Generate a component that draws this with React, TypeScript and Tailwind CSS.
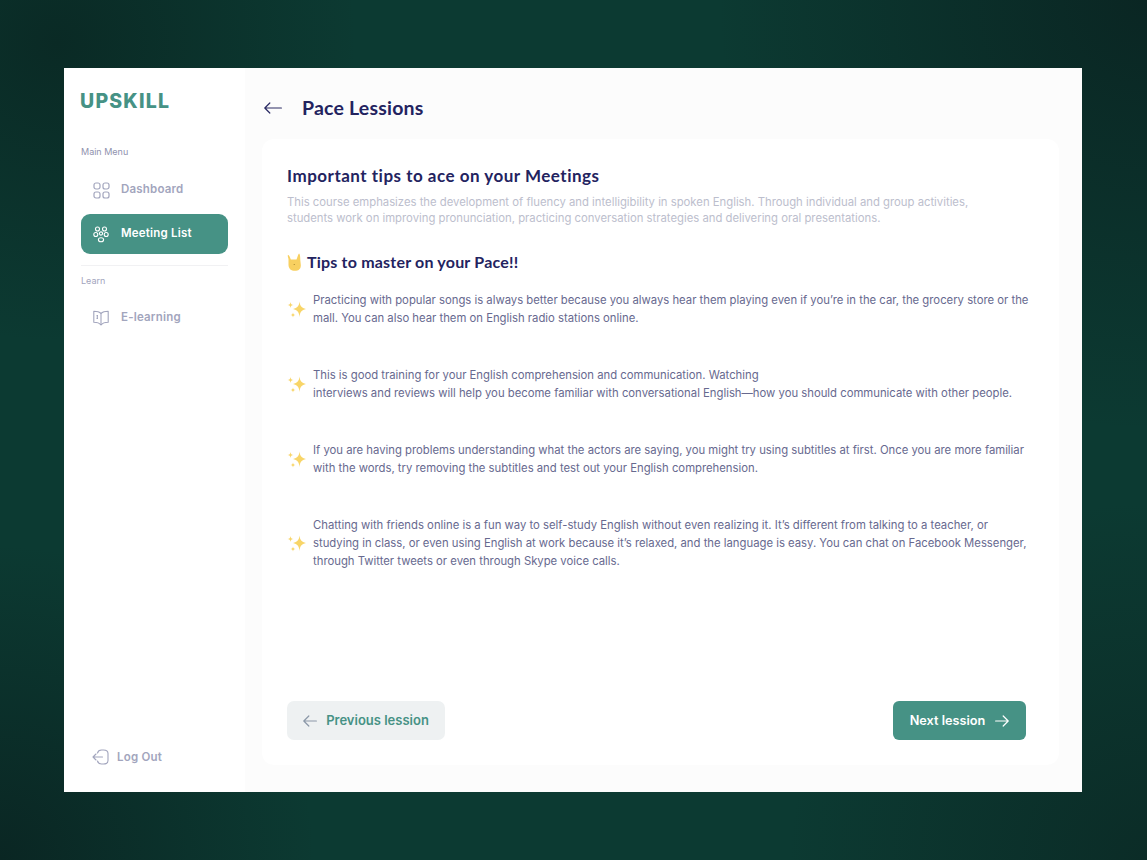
import React from "react";

const tips = [
  {
    lines: [
      "Practicing with popular songs is always better because you always hear them playing even if you’re in the car, the grocery store or the",
      "mall. You can also hear them on English radio stations online.",
    ],
    gap: "mb-[39px]",
  },
  {
    lines: [
      "This is good training for your English comprehension and communication. Watching",
      "interviews and reviews will help you become familiar with conversational English—how you should communicate with other people.",
    ],
    gap: "mb-[39px]",
  },
  {
    lines: [
      "If you are having problems understanding what the actors are saying, you might try using subtitles at first. Once you are more familiar",
      "with the words, try removing the subtitles and test out your English comprehension.",
    ],
    gap: "mb-[39px]",
  },
  {
    lines: [
      "Chatting with friends online is a fun way to self-study English without even realizing it. It’s different from talking to a teacher, or",
      "studying in class, or even using English at work because it’s relaxed, and the language is easy. You can chat on Facebook Messenger,",
      "through Twitter tweets or even through Skype voice calls.",
    ],
    gap: "",
  },
];

const Sparkles = () => (
  <svg width="20" height="20" viewBox="0 0 20 20" className="shrink-0" fill="#f8d568">
    <path d="M12.5 2.5 C13 7 14.5 9 19 10 C14.5 11 13 13 12.5 18 C12 13 10.500 11 6 10 C10.500 9 12 7 12.500 2.500Z" />
    <path d="M3.500 3 C3.700 5 4.500 5.800 6.500 6 C4.500 6.200 3.700 7 3.500 9 C3.300 7 2.500 6.200 0.500 6 C2.500 5.800 3.300 5 3.500 3Z" />
    <path d="M6 13.500 C6.200 15.300 6.800 15.800 8.500 16 C6.800 16.200 6.200 16.800 6 18.500 C5.800 16.800 5.200 16.200 3.500 16 C5.200 15.800 5.800 15.300 6 13.500Z" />
  </svg>
);

const RockHand = () => (
  <svg width="15" height="18" viewBox="0 0 15 18" className="shrink-0" fill="#f8d060">
    <path d="M1.500 6 C1 4 0.500 2.500 1 2 C2 2 3 4 3.800 6.500 L9.500 6.500 C10.500 4 11 1.500 12 0.500 C13 1 13.300 4 13.300 7 L13.800 12 C14 16 11.500 17.800 8 17.800 C4 17.800 1.800 16 1.500 12Z" />
    <circle cx="7.200" cy="11.500" r="0.500" fill="#8a6d1f" />
  </svg>
);

const DashboardIcon = () => (
  <svg width="17" height="17" viewBox="0 0 17 17" fill="none" stroke="#a2a5bd" strokeWidth="1.200">
    <rect x="1" y="1" width="6" height="6" rx="2" />
    <rect x="10" y="1" width="6" height="6" rx="2" />
    <rect x="1" y="10" width="6" height="6" rx="2" />
    <rect x="10" y="10" width="6" height="6" rx="2" />
  </svg>
);

const MeetingIcon = () => (
  <svg width="16" height="17" viewBox="0 0 16 17" fill="none" stroke="#ffffff" strokeWidth="1.100">
    <circle cx="4.500" cy="3" r="2" />
    <circle cx="11.500" cy="3" r="2" />
    <circle cx="2.800" cy="8.500" r="2" />
    <circle cx="13.200" cy="8.500" r="2" />
    <circle cx="8" cy="7.500" r="1.600" />
    <ellipse cx="8" cy="13.800" rx="2.600" ry="2" />
  </svg>
);

const BookIcon = () => (
  <svg width="16" height="16" viewBox="0 0 16 16" fill="none" stroke="#a2a5bd" strokeWidth="1.100" strokeLinejoin="round">
    <path d="M8 3.500 C6.500 2 3.500 1.300 0.800 1.300 L0.800 12.300 C3.500 12.300 6.500 13 8 15 C9.500 13 12.500 12.300 15.200 12.300 L15.200 1.300 C12.500 1.300 9.500 2 8 3.500Z" />
    <path d="M8 3.500 L8 15" />
    <path d="M3.500 5.500 H5 M4.300 5.500 V8.500 M3.500 8.500 H5" />
  </svg>
);

const LogoutIcon = () => (
  <svg width="17" height="16" viewBox="0 0 17 16" fill="none" stroke="#a2a5bd" strokeWidth="1.100" strokeLinecap="round" strokeLinejoin="round">
    <path d="M5.500 4 C6 2 7.500 1 9.500 1 H11.500 C14.300 1 16 2.500 16 4.500 V11.500 C16 13.500 14.300 15 11.500 15 H9.500 C7.500 15 6 14 5.500 12" />
    <path d="M10.500 8 H1 M4 5 L1 8 L4 11" />
  </svg>
);

const Arrow = ({ color, dir, w = 14 }: { color: string; dir: "left" | "right"; w?: number }) => (
  <svg width={w} height="12" viewBox={`0 0 ${w} 12`} fill="none" stroke={color} strokeWidth="1.200" strokeLinecap="round" strokeLinejoin="round">
    {dir === "left" ? (
      <path d={`M${w - 0.6} 6 H0.800 M5.800 1 L0.800 6 L5.800 11`} />
    ) : (
      <path d={`M0.600 6 H${w - 0.8} M${w - 5.8} 1 L${w - 0.8} 6 L${w - 5.8} 11`} />
    )}
  </svg>
);

function Sidebar() {
  return (
    <aside className="w-[181px] shrink-0 bg-white pl-[17px] pr-[17px] flex flex-col font-['Inter',sans-serif]">
      <div className="mt-[22px] h-[24px] flex items-center text-[19.500px] leading-none font-extrabold tracking-[1.200px] text-[#469285] -ml-[1px]">
        UPSKILL
      </div>
      <div className="mt-[32px] text-[9px] leading-[12px] text-[#8f92ae]">Main Menu</div>
      <div className="mt-[12px] h-[40px] pl-[12px] flex items-center gap-[11px] text-[#a2a5bd] text-[11.500px] font-semibold tracking-[0.2px]">
        <DashboardIcon />
        Dashboard
      </div>
      <div className="mt-[4px] h-[40px] rounded-[9px] bg-[#469285] pl-[12px] flex items-center gap-[12px] text-white text-[11.500px] font-semibold tracking-[0.2px]">
        <MeetingIcon />
        Meeting List
      </div>
      <div className="mt-[11px] border-t border-[#f1f1f3]" />
      <div className="mt-[9px] text-[9px] leading-[12px] text-[#a2a5bd]">Learn</div>
      <div className="mt-[11px] h-[40px] pl-[12px] flex items-center gap-[12px] text-[#a2a5bd] text-[11.500px] font-semibold tracking-[0.2px]">
        <BookIcon />
        E-learning
      </div>
      <div className="mt-auto mb-[26px] pl-[11px] flex items-center gap-[8px] text-[#a2a5bd] text-[11.500px] font-semibold tracking-[0.2px]">
        <LogoutIcon />
        Log Out
      </div>
    </aside>
  );
}

export default function App() {
  return (
    <div className="h-[860px] w-full pl-[64px] pt-[68px] bg-[#0c3a32] bg-[radial-gradient(circle_at_5%_5%,#0a2a25_0%,transparent_22%),radial-gradient(circle_at_100%_0%,#0a2623_0%,transparent_30%),radial-gradient(circle_at_0%_100%,#0a2623_0%,transparent_22%),radial-gradient(circle_at_100%_100%,#0b2c27_0%,transparent_25%)]">
      <div className="w-[1018px] h-[724px] flex bg-[#fcfcfc]">
        <Sidebar />
        <main className="flex-1 min-w-0 pl-[17px] pr-[23px] pb-[27px] flex flex-col">
          <header className="h-[71px] pt-[9px] pl-[2px] flex items-center gap-[20px] shrink-0">
            <Arrow color="#2a2a63" dir="left" w={18} />
            <h1 className="text-[19.500px] font-bold text-[#23235f] tracking-[0.2px] font-['Lato',sans-serif]">
              Pace Lessions
            </h1>
          </header>
          <section className="flex-1 rounded-[12px] bg-white pl-[25px] pr-[33px] pt-[25px] pb-[25px] flex flex-col font-['Inter',sans-serif]">
            <h2 className="text-[17px] leading-[24px] font-bold text-[#23235f] tracking-[0.5px] font-['Lato',sans-serif]">
              Important tips to ace on your Meetings
            </h2>
            <p className="mt-[6px] text-[11.300px] leading-[16px] text-[#bcbecd] whitespace-pre-line">
              {"This course emphasizes the development of fluency and intelligibility in spoken English. Through individual and group activities,\nstudents work on improving pronunciation, practicing conversation strategies and delivering oral presentations."}
            </p>
            <div className="mt-[24px] flex items-center gap-[5px] h-[24px] text-[16px] font-bold text-[#23235f] tracking-[0.2px] font-['Lato',sans-serif]">
              <RockHand />
              Tips to master on your Pace!!
            </div>
            <div className="mt-[17px] flex flex-col">
              {tips.map((tip) => (
                <div key={tip.lines[0]} className={`flex items-center gap-[6px] ${tip.gap}`}>
                  <Sparkles />
                  <p className="text-[11.300px] leading-[18px] text-[#67698f] whitespace-nowrap">
                    {tip.lines.map((line) => (
                      <span key={line} className="block">
                        {line}
                      </span>
                    ))}
                  </p>
                </div>
              ))}
            </div>
            <div className="mt-auto flex justify-between">
              <button className="h-[39px] w-[158px] rounded-[7px] bg-[#eef1f2] flex items-center justify-center gap-[9px] text-[13px] font-semibold text-[#469285]">
                <Arrow color="#8b98a8" dir="left" />
                Previous lession
              </button>
              <button className="h-[39px] w-[133px] rounded-[6px] bg-[#469285] flex items-center justify-center gap-[10px] text-[12.700px] font-semibold text-white">
                Next lession
                <Arrow color="#ffffff" dir="right" />
              </button>
            </div>
          </section>
        </main>
      </div>
    </div>
  );
}
